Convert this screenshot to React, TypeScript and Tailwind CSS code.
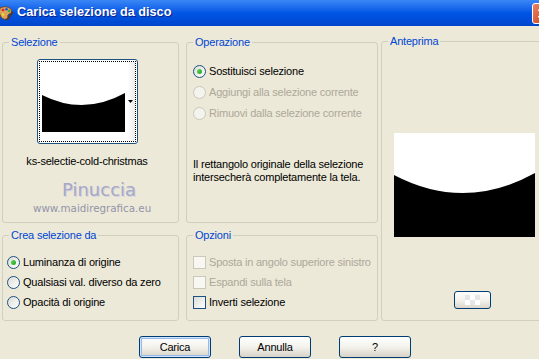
import React from "react";

const bodyFont = { fontFamily: "'Liberation Sans',Arial,sans-serif" };

function Radio({ checked = false, disabled = false }: { checked?: boolean; disabled?: boolean }) {
  return (
    <span
      className={
        "w-[13px] h-[13px] rounded-full border flex items-center justify-center shrink-0 " +
        (disabled
          ? "border-[#CAC8BB] bg-[#F4F3EE]"
          : "border-[#1C5180] bg-gradient-to-br from-[#DCDCD7] to-white")
      }
    >
      {checked && (
        <span className="w-[5px] h-[5px] rounded-full bg-gradient-to-br from-[#5EDB59] to-[#21A121]" />
      )}
    </span>
  );
}

function Check({ disabled = false }: { disabled?: boolean }) {
  return (
    <span
      className={
        "w-[13px] h-[13px] border shrink-0 " +
        (disabled
          ? "border-[#CAC8BB] bg-[#F8F7F2]"
          : "border-[#1C5180] bg-gradient-to-br from-[#DCDCD7] to-white")
      }
    />
  );
}

function Group({
  label,
  className,
  children,
}: {
  label: string;
  className: string;
  children?: React.ReactNode;
}) {
  return (
    <fieldset className={"border border-[#D0D0BF] rounded-[3px] min-w-0 " + className}>
      <legend className="ml-[6px] px-[2px] text-[#0046D5] leading-[12px] whitespace-nowrap">{label}</legend>
      {children}
    </fieldset>
  );
}

function XPButton({ label, def = false }: { label: string; def?: boolean }) {
  return (
    <div
      className={
        "w-[72px] h-[22px] rounded-[3px] border border-[#003C74] bg-gradient-to-b from-white via-[#F3F2EC] to-[#D8D3C7] flex items-center justify-center text-black " +
        (def ? "shadow-[inset_0_0_0_1px_#CEE7FF,inset_0_0_0_2px_#98B8EA]" : "")
      }
    >
      {label}
    </div>
  );
}

export default function App() {
  return (
    <div
      className="w-[539px] h-[359px] overflow-hidden bg-[#ECE9D8] text-[11px] tracking-[-0.2px] text-black whitespace-nowrap"
      style={bodyFont}
    >
      {/* Title bar */}
      <div className="h-[26px] flex items-center bg-gradient-to-b from-[#3A86F6] via-[#0055E5] to-[#0046CC] overflow-hidden tracking-normal">
        <svg width="16" height="16" viewBox="0 0 16 16" className="-ml-[2px] shrink-0">
          <path d="M2 3 Q8 0 13 4 Q15 8 11 9 Q9 10 10 13 Q6 16 3 12 Q0 8 2 3Z" fill="#D9A45A" stroke="#6B3A10" strokeWidth="0.8" />
          <circle cx="5" cy="5" r="1.3" fill="#E02020" />
          <circle cx="8.5" cy="4.2" r="1.3" fill="#2050E0" />
          <circle cx="11.3" cy="6" r="1.2" fill="#20B040" />
          <circle cx="5" cy="9.5" r="1.3" fill="#F0E030" />
          <path d="M9 15 L15 7" stroke="#603010" strokeWidth="1.5" />
        </svg>
        <span className="ml-[3px] text-white font-bold text-[12.7px] [text-shadow:1px_1px_0_#0A1F8A]">
          Carica selezione da disco
        </span>
        <div className="ml-auto -mr-[14px] w-[21px] h-[21px] rounded-[3px] border border-white bg-gradient-to-br from-[#E8825E] to-[#C83A14] flex items-center justify-center shrink-0">
          <svg width="11" height="11" viewBox="0 0 11 11">
            <path d="M1.5 1.5 L9.5 9.5 M9.5 1.5 L1.5 9.5" stroke="white" strokeWidth="2" />
          </svg>
        </div>
      </div>

      {/* Body */}
      <div className="flex pl-[2px] pt-[10px]">
        <div className="flex flex-col w-[177px] shrink-0">
          <Group label="Selezione" className="h-[187px]">
            <div className="w-[168px] flex flex-col items-center">
              <div className="mt-[11px] w-[101px] h-[85px] border border-[#1C5180] rounded-[3px] bg-white p-px">
                <div className="h-full border border-dotted border-black flex">
                  <div className="pl-[2px] pt-[2px]">
                    <svg width="83" height="68" viewBox="0 0 83 68" className="block">
                      <rect width="83" height="68" fill="white" />
                      <path d="M0 31 Q41.5 52 83 29 L83 68 L0 68 Z" fill="black" />
                    </svg>
                  </div>
                  <div className="ml-auto w-[8px] bg-gradient-to-r from-white to-[#ECECEC] flex items-center justify-center">
                    <svg width="5" height="3" viewBox="0 0 5 3">
                      <path d="M0 0 L5 0 L2.5 3 Z" fill="black" />
                    </svg>
                  </div>
                </div>
              </div>
              <div className="mt-[10px] leading-[14px]">ks-selectie-cold-christmas</div>
            </div>
            <div className="flex flex-col tracking-normal" style={{ fontFamily: "'DejaVu Sans',sans-serif" }}>
              <span className="ml-[59px] mt-[12px] text-[18px] leading-[19px] text-[#A6A8C4] [text-shadow:1px_1px_0_#D4D4E2]">
                Pinuccia
              </span>
              <span className="ml-[30px] mt-[3px] text-[10.3px] leading-[12px] text-[#9393AA]">
                www.maidiregrafica.eu
              </span>
            </div>
          </Group>
          <Group label="Crea selezione da" className="mt-[6px] h-[92px]">
            <div className="pl-[4px] pt-[11px] flex flex-col">
              <div className="h-[20px] flex items-center gap-[3px]">
                <Radio checked />
                <span>Luminanza di origine</span>
              </div>
              <div className="h-[20px] flex items-center gap-[3px]">
                <Radio />
                <span>Qualsiasi val. diverso da zero</span>
              </div>
              <div className="h-[20px] flex items-center gap-[3px]">
                <Radio />
                <span>Opacità di origine</span>
              </div>
            </div>
          </Group>
        </div>

        <div className="flex flex-col w-[192px] ml-[7px] shrink-0">
          <Group label="Operazione" className="h-[187px]">
            <div className="pl-[6px] pt-[13px] flex flex-col">
              <div className="h-[21px] flex items-center gap-[3px]">
                <Radio checked />
                <span>Sostituisci selezione</span>
              </div>
              <div className="h-[21px] flex items-center gap-[3px] text-[#ACA899]">
                <Radio disabled />
                <span>Aggiungi alla selezione corrente</span>
              </div>
              <div className="h-[21px] flex items-center gap-[3px] text-[#ACA899]">
                <Radio disabled />
                <span>Rimuovi dalla selezione corrente</span>
              </div>
              <p className="mt-[34px] leading-[12.5px]">
                Il rettangolo originale della selezione
                <br />
                intersecherà completamente la tela.
              </p>
            </div>
          </Group>
          <Group label="Opzioni" className="mt-[6px] h-[92px]">
            <div className="pl-[6px] pt-[11px] flex flex-col">
              <div className="h-[20px] flex items-center gap-[3px] text-[#ACA899]">
                <Check disabled />
                <span>Sposta in angolo superiore sinistro</span>
              </div>
              <div className="h-[20px] flex items-center gap-[3px] text-[#ACA899]">
                <Check disabled />
                <span>Espandi sulla tela</span>
              </div>
              <div className="h-[20px] flex items-center gap-[3px]">
                <Check />
                <span>Inverti selezione</span>
              </div>
            </div>
          </Group>
        </div>

        <Group label="Anteprima" className="ml-[3px] -mt-px w-[175px] h-[286px] shrink-0">
          <div className="flex flex-col">
            <svg width="141" height="104" viewBox="0 0 141 104" className="block ml-[12px] mt-[86px]">
              <rect width="141" height="104" fill="white" />
              <path d="M0 42 Q70.5 79 141 40 L141 104 L0 104 Z" fill="black" />
            </svg>
            <div className="ml-[72px] mt-[54px] w-[37px] h-[18px] rounded-[3px] border border-[#003C74] bg-gradient-to-b from-white via-[#F3F2EC] to-[#DCD7CC] flex items-center justify-center">
              <div className="grid grid-cols-3 w-[15px] h-[10px]">
                <span className="bg-[#E6E6E6]" />
                <span className="bg-white" />
                <span className="bg-[#E6E6E6]" />
                <span className="bg-white" />
                <span className="bg-[#E6E6E6]" />
                <span className="bg-white" />
              </div>
            </div>
          </div>
        </Group>
      </div>

      {/* Buttons */}
      <div className="flex pl-[139px] gap-[28px] mt-[15px]">
        <XPButton label="Carica" def />
        <XPButton label="Annulla" />
        <XPButton label="?" />
      </div>
    </div>
  );
}
